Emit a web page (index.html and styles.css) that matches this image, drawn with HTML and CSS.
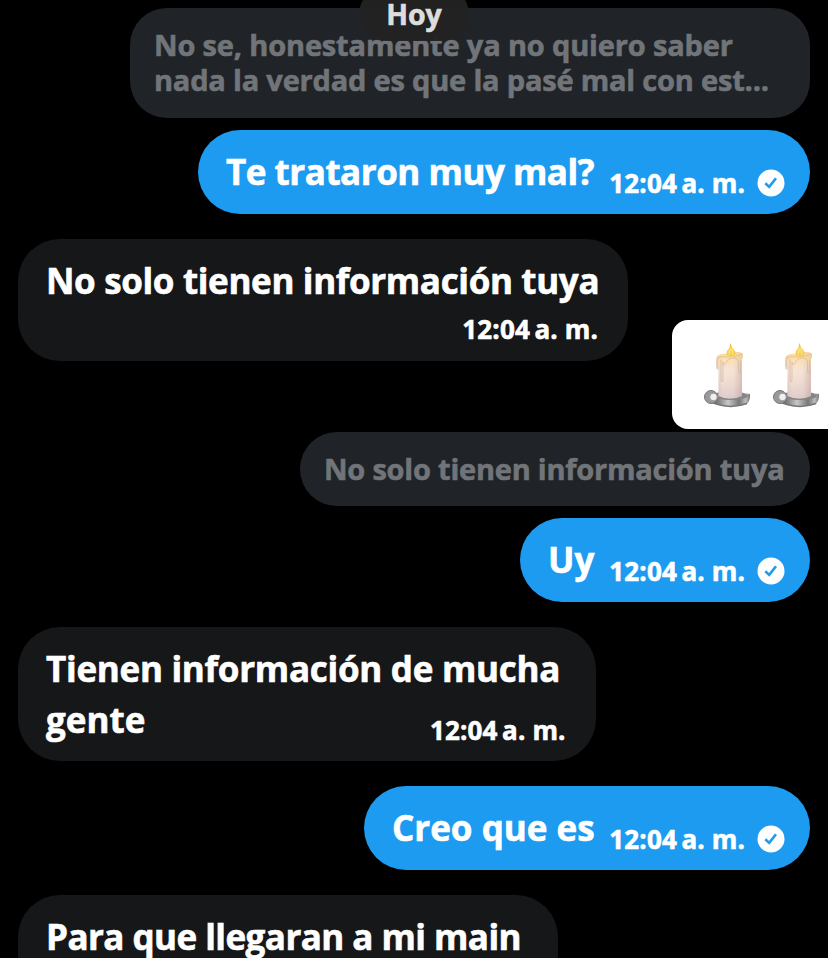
FILE: index.html
```html
<!doctype html>
<html lang="es">
<head>
<meta charset="utf-8">
<meta name="viewport" content="width=device-width">
<title>Mensajes</title>
<link rel="stylesheet" href="styles.css">
</head>
<body>
<svg width="0" height="0" class="defs">
  <defs>
    <linearGradient id="wax" x1="0" x2="1" y1="0" y2="0">
      <stop offset="0" stop-color="#d9c6c2"/><stop offset=".25" stop-color="#f5e6e0"/><stop offset=".65" stop-color="#f1e1de"/><stop offset="1" stop-color="#bfa9a8"/>
    </linearGradient>
    <linearGradient id="glow" x1="0" x2="0" y1="0" y2="1">
      <stop offset="0" stop-color="#ffd982" stop-opacity=".9"/><stop offset=".4" stop-color="#ffe3c4" stop-opacity=".35"/><stop offset="1" stop-color="#cdb6ba" stop-opacity=".55"/>
    </linearGradient>
    <linearGradient id="metal" x1="0" x2="1" y1="0" y2="0">
      <stop offset="0" stop-color="#555"/><stop offset=".25" stop-color="#777"/><stop offset=".5" stop-color="#c8c8c8"/><stop offset=".75" stop-color="#777"/><stop offset=".9" stop-color="#bbb"/><stop offset="1" stop-color="#777"/>
    </linearGradient>
    <radialGradient id="flame" cx=".5" cy=".65" r=".6">
      <stop offset="0" stop-color="#fff2a0"/><stop offset=".6" stop-color="#fbd04a"/><stop offset="1" stop-color="#e5ab45"/>
    </radialGradient>
  </defs>
  <symbol id="candle" viewBox="0 0 48 66">
    <path d="M6 51Q27 46 46 51Q46.500 57 43 61Q28 66 14 62Q7 61 2 57Z" fill="url(#metal)"/>
    <path d="M12 61Q28 66 43 60.500" fill="none" stroke="#777" stroke-width="1.500"/>
    <ellipse cx="27" cy="53" rx="16.500" ry="4" fill="#858585"/>
    <circle cx="7" cy="54" r="6.500" fill="#999" stroke="#777"/>
    <circle cx="9.500" cy="54" r="3.800" fill="#f0f0f0" stroke="#999"/>
    <path d="M13 13Q18 10 23 11Q31 8 38 10Q40 12 38 16V53Q26 58 14.500 53V27Q11 25 13 13Z" fill="url(#wax)"/>
    <path d="M13 13Q18 10 23 11Q31 8 38 10Q40 12 38 16V53Q26 58 14.500 53V27Q11 25 13 13Z" fill="url(#glow)"/>
    <path d="M13 26V15Q17 13 24 14Q31 15 38 11M17 17V38Q18 40 19 38V19Q20 24 22 20Q24 15 30 15Q34 15 34.500 19V29Q35.500 32 36.500 29V18" fill="none" stroke="#d0b3a4" stroke-width="1" stroke-linecap="round" opacity=".65"/>
    <path d="M26.500 0Q27 4 31 8Q33 13 27 14Q21 13 23 8Q26 5 26.500 0Z" fill="url(#flame)"/>
    <path d="M27 8V13" stroke="#c8892f" stroke-width="1" opacity=".5"/>
  </symbol>
  <symbol id="seen" viewBox="0 0 28 28">
    <circle cx="14" cy="14" r="13.500" fill="#fff"/>
    <path d="M8.300 14.300L12.200 17.900L19 9.300" fill="none" stroke="#1d9bf0" stroke-width="2.600"/>
  </symbol>
</svg>

<div class="day">Hoy</div>

<main class="chat">
  <div class="quote q1"><span class="ql1">No se, honestamente ya no quiero saber</span><br><span class="ql2">nada la verdad es que la pasé mal con est...</span></div>
  <div class="msg out m1">
    <span class="text">Te trataron muy mal?</span>
    <span class="time">12:04&#8201;a. m.</span>
    <svg class="seen"><use href="#seen"/></svg>
  </div>

  <div class="msg in m2">
    <span class="text">No solo tienen información tuya</span>
    <span class="time">12:04&#8201;a. m.</span>
  </div>
  <div class="sticker">
    <svg class="candle"><use href="#candle"/></svg>
    <svg class="candle"><use href="#candle"/></svg>
  </div>

  <div class="quote q2"><span class="ql3">No solo tienen información tuya</span></div>
  <div class="msg out m3">
    <span class="text">Uy</span>
    <span class="time">12:04&#8201;a. m.</span>
    <svg class="seen"><use href="#seen"/></svg>
  </div>

  <div class="msg in m4">
    <span class="text">Tienen información de mucha<br><span class="last">gente</span></span>
    <span class="time">12:04&#8201;a. m.</span>
  </div>

  <div class="msg out m5">
    <span class="text">Creo que es</span>
    <span class="time">12:04&#8201;a. m.</span>
    <svg class="seen"><use href="#seen"/></svg>
  </div>

  <div class="msg in m6">
    <span class="text">Para que llegaran a mi main</span>
  </div>
</main>
</body>
</html>
```
FILE: styles.css
```css
*{box-sizing:border-box}
html,body{height:100%; overflow:hidden}
body{margin:0; background:#000; color:#fff; font-family:"Open Sans","Noto Sans",sans-serif; font-weight:700; -webkit-text-stroke:.6px}
.defs{position:absolute}

.day{position:absolute; z-index:2; top:-13px; left:359px; width:110px; height:54px; padding-top:13px; border-radius:27px; background:rgba(34,34,34,.96); color:#ddd; font-size:28.500px; line-height:29px; text-align:center}

.chat{display:flex; flex-direction:column; height:958px; padding:8px 18px 0; overflow:hidden}
.chat > div{flex:none; white-space:nowrap}

.quote{align-self:flex-end; background:#202327; color:#717579; font-size:29px; line-height:35px; border-radius:37px}
.q1{width:680px; height:110px; padding:19px 24px}
.q2{width:510px; height:74px; margin-top:3px; padding:19px 24px}
.ql1{letter-spacing:-.16px}
.ql2{letter-spacing:-.19px}
.ql3{letter-spacing:-.22px}

.msg{display:flex; font-size:35px; line-height:51px}
.time{font-size:26px; line-height:30px; letter-spacing:.15px}

.out{align-self:flex-end; height:84px; margin-top:12px; padding:16px 25px 0 28px; border-radius:42px; background:#1d9bf0}
.out .time{margin:22px 0 0 auto}
.seen{width:28px; height:28px; margin:23px 0 0 12px}

.in{align-self:flex-start; margin-top:25px; padding:16px 30px 0 28px; border-radius:42px; background:#161719}

.m1{width:612px}
.m1 .text{letter-spacing:-.48px}
.m2{width:610px; height:122px; flex-wrap:wrap; align-content:flex-start}
.m2 .text{letter-spacing:-.35px}
.m2 .time{margin:8px 0 0 auto}
.m3{width:290px}
.m4{width:578px; height:134px}
.m4 .text{flex:none; width:384px; letter-spacing:-.28px}
.m4 .last{letter-spacing:0}
.m4 .time{margin-top:72px}
.m5{width:446px}
.msg.m5{margin-top:25px}
.m6{width:540px; height:122px}
.m6 .text{letter-spacing:-.55px}

.sticker{display:flex; gap:21px; align-self:flex-end; width:156px; height:109px; margin:-41px -18px 0 0; padding:23px 0 0 32px; border-radius:16px 0 0 16px; background:#fff}
.candle{flex:none; width:48px; height:66px}
```
